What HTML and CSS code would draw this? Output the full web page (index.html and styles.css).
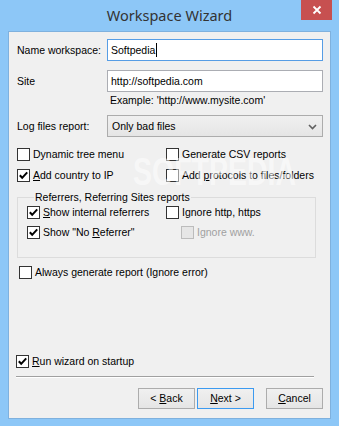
FILE: index.html
```html
<!DOCTYPE html>
<html>
<head>
<meta charset="utf-8">
<link rel="stylesheet" href="styles.css">
</head>
<body>
<div class="window">
  <div class="titlebar">
    <div></div>
    <div class="title">Workspace Wizard</div>
    <div class="close-wrap"><div class="close">
      <svg width="10" height="10" viewBox="0 0 10 10"><path d="M1.5 1.5 L8.5 8.5 M8.5 1.5 L1.5 8.5" stroke="#fff" stroke-width="1.8" fill="none"/></svg>
    </div></div>
  </div>
  <div class="client">
    <div class="row">
      <div class="label">Name workspace:</div>
      <div class="field focus"><span>Softpedia</span><span class="caret"></span></div>
    </div>
    <div class="row row-site">
      <div class="label">Site</div>
      <div class="field"><span>http://softpedia.com</span></div>
    </div>
    <div class="example">Example: 'http://www.mysite.com'</div>
    <div class="row row-log">
      <div class="label">Log files report:</div>
      <div class="field combo"><span>Only bad files</span>
        <svg class="chev" width="9" height="6" viewBox="0 0 9 6"><path d="M1 1 L4.5 4.5 L8 1" stroke="#606060" stroke-width="1.6" fill="none"/></svg>
      </div>
    </div>

    <div class="checks">
      <div class="cbl"><span class="cb"></span><span>Dynamic tree menu</span></div>
      <div class="cbl"><span class="cb"></span><span>Generate CSV reports</span></div>
      <div class="cbl"><span class="cb on"><svg width="11" height="11" viewBox="0 0 11 11"><path d="M1.8 5.2 L4.2 7.8 L9.2 2.3" stroke="#000" stroke-width="2" fill="none"/></svg></span><span><u>A</u>dd country to IP</span></div>
      <div class="cbl"><span class="cb"></span><span>Add <u>p</u>rotocols to files/folders</span></div>
    </div>

    <fieldset class="group">
      <legend>Referrers, Referring Sites reports</legend>
      <div class="gchecks">
        <div class="cbl"><span class="cb on"><svg width="11" height="11" viewBox="0 0 11 11"><path d="M1.8 5.2 L4.2 7.8 L9.2 2.3" stroke="#000" stroke-width="2" fill="none"/></svg></span><span><u>S</u>how internal referrers</span></div>
        <div class="cbl"><span class="cb"></span><span>Ignore http, https</span></div>
        <div class="cbl"><span class="cb on"><svg width="11" height="11" viewBox="0 0 11 11"><path d="M1.8 5.2 L4.2 7.8 L9.2 2.3" stroke="#000" stroke-width="2" fill="none"/></svg></span><span>Show "No <u>R</u>eferrer"</span></div>
        <div class="cbl disabled"><span class="cb"></span><span>Ignore www.</span></div>
      </div>
    </fieldset>

    <div class="cbl always"><span class="cb"></span><span>Always generate report (Ignore error)</span></div>

    <div class="footer">
      <div class="cbl run"><span class="cb on"><svg width="11" height="11" viewBox="0 0 11 11"><path d="M1.8 5.2 L4.2 7.8 L9.2 2.3" stroke="#000" stroke-width="2" fill="none"/></svg></span><span><u>R</u>un wizard on startup</span></div>
      <div class="sep"></div>
      <div class="buttons">
        <div class="btn"><span>&lt; <u>B</u>ack</span></div>
        <div class="btn default"><span><u>N</u>ext &gt;</span></div>
        <div class="btn cancel"><span><u>C</u>ancel</span></div>
      </div>
    </div>
    <div class="watermark">SOFTPEDIA</div>
  </div>
</div>
</body>
</html>
```
FILE: styles.css
```css
* { box-sizing: border-box; }
html, body { margin: 0; padding: 0; }
body {
  width: 339px;
  height: 426px;
  background: #8dc7f7;
  font-family: "Liberation Sans", Arial, sans-serif;
  font-size: 10.5px;
  color: #000;
  overflow: hidden;
}
.window {
  width: 339px;
  height: 426px;
  display: flex;
  flex-direction: column;
  padding: 0 8px 7px 8px;
}
.titlebar {
  height: 31px;
  display: grid;
  grid-template-columns: 1fr auto 1fr;
  margin: 0 -8px;
}
.title {
  font-family: "Noto Sans", "Open Sans", sans-serif;
  font-size: 14.5px;
  color: #333;
  line-height: 30px;
}
.close-wrap {
  display: flex;
  justify-content: flex-end;
  align-items: flex-start;
  padding-right: 7px;
}
.close {
  width: 31px;
  height: 20px;
  background: #c75050;
  display: flex;
  align-items: center;
  justify-content: center;
}
.client {
  position: relative;
  flex: 1;
  background: #f0f0f0;
  border: 1px solid #7fb1de;
  display: flex;
  flex-direction: column;
  padding: 7px 7px 9px 8px;
}
.row {
  display: flex;
  align-items: center;
  height: 22px;
}
.label {
  width: 90px;
  line-height: 13px;
}
.field {
  width: 216px;
  height: 22px;
  background: #fff;
  border: 1px solid #abadb3;
  padding: 0 3px;
  line-height: 20px;
  white-space: nowrap;
  display: flex;
  align-items: center;
}
.field.focus { border-color: #569de5; }
.caret {
  display: inline-block;
  width: 1px;
  height: 14px;
  background: #000;
  margin-left: 1px;
}
.row-site { margin-top: 9px; }
.example {
  margin-top: 2px;
  padding-left: 93px;
  line-height: 13px;
  height: 13px;
}
.row-log { margin-top: 8px; }
.combo {
  background: linear-gradient(#f0f0f0, #e5e5e5);
  border-color: #acacac;
  justify-content: space-between;
  padding: 0 5px 0 4px;
}
.chev { margin-top: 1px; }
.cbl {
  display: flex;
  align-items: center;
  height: 13px;
  line-height: 13px;
  white-space: nowrap;
}
.cb {
  width: 13px;
  height: 13px;
  border: 1px solid #333;
  background: #fff;
  margin-right: 3px;
  flex: none;
  display: flex;
  align-items: center;
  justify-content: center;
}
u { text-decoration: underline; text-underline-offset: 1px; }
.checks {
  margin-top: 11px;
  display: grid;
  grid-template-columns: 149px 1fr;
  row-gap: 8px;
}
.group {
  margin: 9px 7px 0 0;
  padding: 2px 0 18px 9px;
  border: 1px solid #dcdcdc;
  min-width: 0;
}
.group legend {
  padding: 0 1px;
  margin-left: 7px;
  line-height: 13px;
}
.gchecks {
  display: grid;
  grid-template-columns: 139px 1fr;
  row-gap: 7px;
}
.disabled { color: #a0a0a0; padding-left: 15px; }
.disabled .cb { border-color: #bcbcbc; background: #e6e6e6; }
.always { margin-top: 8px; margin-left: 2px; }
.footer {
  margin-top: auto;
  display: flex;
  flex-direction: column;
}
.run { margin-left: -1px; }
.sep {
  margin: 8px 9px 0 -1px;
  height: 2px;
  border-top: 1px solid #a0a0a0;
  border-bottom: 1px solid #fff;
}
.buttons {
  margin-top: 10px;
  display: flex;
  justify-content: flex-end;
}
.btn {
  width: 57px;
  height: 21px;
  border: 1px solid #acacac;
  background: linear-gradient(#f0f0f0, #e5e5e5);
  display: flex;
  align-items: center;
  justify-content: center;
  line-height: 13px;
  white-space: pre;
}
.btn.default { margin-left: 2px; border-color: #3c9af0; }
.btn.cancel { margin-left: 12px; }
.watermark {
  position: absolute;
  left: 124px;
  top: 121px;
  font-family: "Liberation Sans", sans-serif;
  font-weight: bold;
  font-size: 38px;
  line-height: 38px;
  transform: scaleX(0.75);
  transform-origin: left top;
  color: rgba(255,255,255,0.5);
  pointer-events: none;
}
```
